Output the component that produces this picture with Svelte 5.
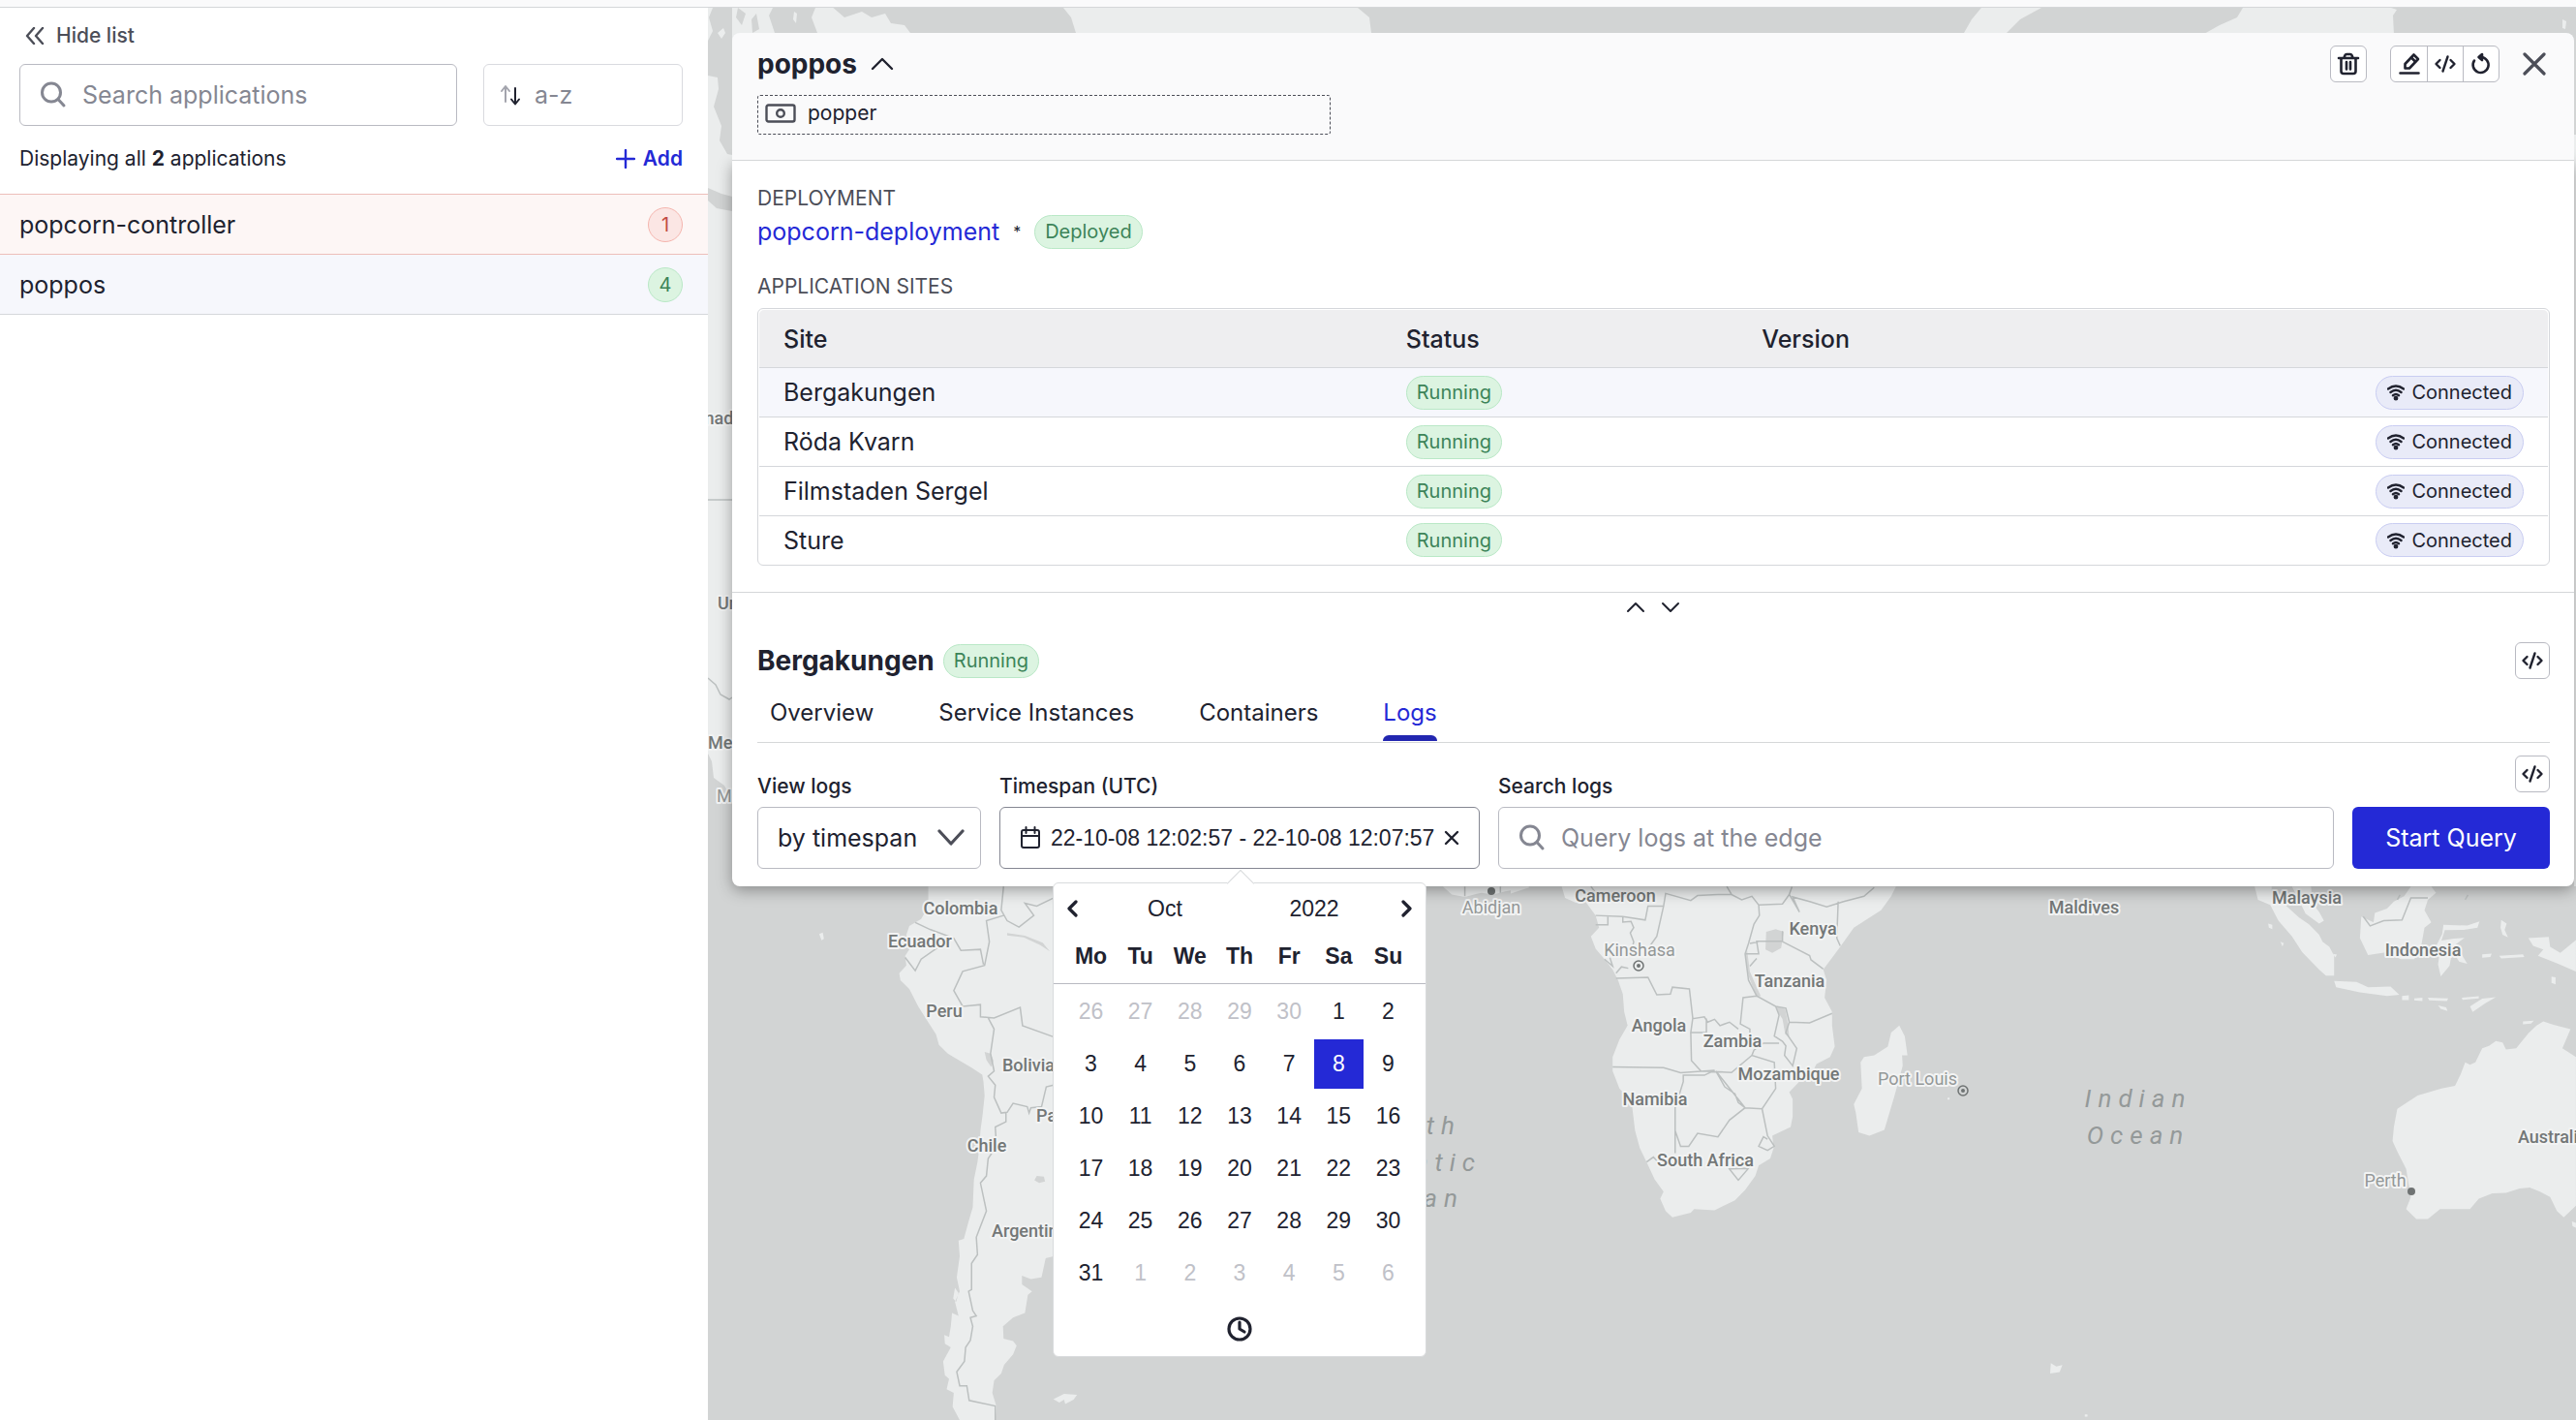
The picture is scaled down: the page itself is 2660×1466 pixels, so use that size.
<!--
  Applications view: the application list on the left, the details panel
  of the selected application over the site map on the right.

  The panel shows the sites of the deployment and, below the splitter,
  the log query form of the selected site with its timespan calendar.
-->
<script>
  const applications = [
    { name: 'popcorn-controller', count: 1, level: 'error' },
    { name: 'poppos', count: 4, level: 'ok' },
  ];

  const sites = ['Bergakungen', 'Röda Kvarn', 'Filmstaden Sergel', 'Sture'];
  const tabs = ['Overview', 'Service Instances', 'Containers', 'Logs'];
  const weekdays = ['Mo', 'Tu', 'We', 'Th', 'Fr', 'Sa', 'Su'];

  let search = $state('');
  let query = $state('');
  let selectedApp = $state('poppos');
  let selectedSite = $state('Bergakungen');
  let activeTab = $state('Logs');
  let mode = $state('timespan');
  let timespan = $state('22-10-08 12:02:57 - 22-10-08 12:07:57');
  let selectedDay = $state(8);

  // Six weeks starting on Monday, September 26th.
  const weeks = Array.from({ length: 6 }, (_, w) =>
    Array.from({ length: 7 }, (_, d) => {
      const n = w * 7 + d - 4;
      if (n < 1) return { day: n + 30, outside: true };
      if (n > 31) return { day: n - 31, outside: true };
      return { day: n, outside: false };
    })
  );

  // Map labels. City labels are lighter than country labels.
  const labels = [
    { text: 'Canada', x: 706, y: 438, anchor: 'start' },
    { text: 'United States', x: 741, y: 629, anchor: 'start' },
    { text: 'Mexico', x: 731, y: 773, anchor: 'start' },
    { text: 'Mexico City', x: 740, y: 828, anchor: 'start', city: true },
    { text: 'Colombia', x: 992, y: 944 },
    { text: 'Ecuador', x: 950, y: 978 },
    { text: 'Peru', x: 975, y: 1050 },
    { text: 'Bolivia', x: 1035, y: 1106, anchor: 'start' },
    { text: 'Paraguay', x: 1070, y: 1158, anchor: 'start' },
    { text: 'Chile', x: 1019, y: 1189 },
    { text: 'Argentina', x: 1024, y: 1277, anchor: 'start' },
    { text: 'Abidjan', x: 1540, y: 943, city: true },
    { text: 'Cameroon', x: 1668, y: 931 },
    { text: 'Kinshasa', x: 1693, y: 987, city: true },
    { text: 'Kenya', x: 1872, y: 965 },
    { text: 'Tanzania', x: 1848, y: 1019 },
    { text: 'Angola', x: 1713, y: 1065 },
    { text: 'Zambia', x: 1789, y: 1081 },
    { text: 'Mozambique', x: 1847, y: 1115 },
    { text: 'Namibia', x: 1709, y: 1141 },
    { text: 'South Africa', x: 1761, y: 1204 },
    { text: 'Port Louis', x: 1980, y: 1120, city: true },
    { text: 'Maldives', x: 2152, y: 943 },
    { text: 'Malaysia', x: 2382, y: 933 },
    { text: 'Indonesia', x: 2502, y: 987 },
    { text: 'Australia', x: 2600, y: 1180, anchor: 'start' },
    { text: 'Perth', x: 2463, y: 1225, city: true },
  ];
</script>

{#snippet codeIcon()}
  <svg viewBox="0 0 24 24" width="24" height="24" class="icon" aria-hidden="true">
    <path d="M6.500 8 2.500 12l4 4M17.500 8l4 4-4 4M14.500 4.500l-5 15" />
  </svg>
{/snippet}

{#snippet searchIcon()}
  <svg viewBox="0 0 28 28" width="28" height="28" class="icon" aria-hidden="true">
    <circle cx="12" cy="11.500" r="9.500" />
    <path d="m19 18.500 6 6.500" />
  </svg>
{/snippet}

<div class="topbar"></div>
<div class="layout">
  <aside class="sidebar">
    <button type="button" class="hide-list">
      <svg viewBox="0 0 20 18" width="20" height="18" class="icon" aria-hidden="true">
        <path d="M9 1 2 9l7 8M18 1l-7 8 7 8" />
      </svg>
      Hide list
    </button>

    <div class="filters">
      <label class="field search">
        {@render searchIcon()}
        <input type="text" aria-label="Search applications" placeholder="Search applications" bind:value={search} />
      </label>
      <button type="button" class="field sort">
        <svg viewBox="0 0 22 24" width="22" height="24" class="icon" aria-hidden="true">
          <path class="dim" d="M6 19V4M2 8l4-5 4 5" />
          <path d="M16 5v16M12 16.500l4 5 4-5" />
        </svg>
        a-z
      </button>
    </div>

    <div class="summary">
      <span>Displaying all <strong>2</strong> applications</span>
      <button type="button" class="add">
        <svg viewBox="0 0 20 20" width="20" height="20" class="icon" aria-hidden="true">
          <path d="M10 1v18M1 10h18" />
        </svg>
        Add
      </button>
    </div>

    <ul class="apps">
      {#each applications as app}
        <li>
          <button
            type="button"
            class="app {app.level}"
            class:selected={app.name === selectedApp}
            onclick={() => (selectedApp = app.name)}
          >
            {app.name}
            <span class="count">{app.count}</span>
          </button>
        </li>
      {/each}
    </ul>
  </aside>

  <main>
    <svg class="map" viewBox="731 8 1929 1458" preserveAspectRatio="xMinYMin slice" aria-hidden="true">
      <g class="land">
        <!-- North America, left of the panel -->
        <path d="M731 8H770V830L756 826 748 811 737 803 735 786 731 778Z" />
        <!-- Arctic coast, above the panel -->
        <path d="M756 8h42l-4 8 6 18h-44zM842 8l-4 10 6 16h96l-6-8-14-2-6-10-14 4-10-6-18 6-14-12zM1098 8l8 10 5 16h305l-2-16-12-10zM2046 8l-10 12-8 14h44l14-14 22-12zM2316 8l-6 10-18 8-18 10h198l-1-20 4-6-6-2zM2646 20l4 2-1 8-3-1z" />
        <path d="M2658 139h2v776h-2z" />
      </g>
      <g class="water">
        <path d="M736 8h20v152l-5-1-8-14 2-15-8-20 5-18-1-12-10-2V42l5-10-4-14zM731 194l14 6 11 3v15l-16-3-9-8z" />
        <path d="M762 8l8 6-4 12-6-8zM776 20l5-6 3 16-7 4z" />
      </g>
      <path class="land" d="M741 34l6-5 2 5-4 6zM820 12l3 2-1 10-3-4z" />
      <path class="border" d="M731 516h25M731 700l8 7 5 10 9 5 3-2" />

      <g transform="translate(740 900) scale(.6122 .361)">
        <path class="land" d="M357 42V100L345 135 325 155 320 180 328 215 318 240 320 268 308 290 310 310 325 335 340 385 355 425 370 465 375 495 390 520 405 535 430 560 448 580 450 600 452 640 449 690 445 740 443 790 440 830 434 880 432 960 425 1000 417 1050 408 1055 410 1100 405 1160 410 1200 402 1230 408 1270 397 1262 395 1300 392 1330 384 1325 385 1350 395 1360 382 1400 385 1440 392 1450 388 1480 400 1490 398 1530 410 1568H470L472 1530 465 1490 468 1455 480 1435 485 1410 500 1380 506 1355 500 1342 484 1335 483 1300 500 1275 520 1262 525 1210 532 1200 515 1180 515 1155 530 1165 548 1160 555 1105 568 1100V42ZM402 1190l6 15-4 25-5-10zM568 1508l18-15 22 3-6 14-14 12-2-12-8 8zM173 178l6-4 2 18-4 4z" />
        <path class="water" d="M452 515l10 5 5 20-4 18-8-20zM540 870l12 2 2 14-10 4-8-8zM490 175l30 8 30 20 12 25-16-18-28-22-28-6z" />
        <path class="border" d="M484 42 480 110 490 140 510 158 535 125 520 90 540 98 568 75M484 125 455 140 460 200 452 268 415 285 400 340 415 385 445 380 445 415 468 418 512 388 516 440 568 472M335 145 360 165 400 190 412 225 445 222 450 265M318 245 335 283 345 250 372 218M458 418 468 450 462 520 468 570 458 585 470 610 468 645 480 690 490 688 500 662 524 672 527 690 530 675 548 672 556 615 568 610M488 690 488 715 470 730 472 785 458 820 455 870 445 890 455 970 438 1045 440 1095 430 1120 430 1195 425 1200 432 1255 438 1270 428 1275 432 1300 428 1340 420 1360 418 1400 405 1430 410 1470 422 1470 426 1512 470 1528V1568" />
        <path class="land" d="M1225 42 1240 65 1262 72 1290 60 1310 65 1330 56 1370 45V42Z" />
        <path class="border" d="M1262 42v28M1322 42v18" />
      </g>

      <g transform="translate(1560 900) scale(.7015 .361)">
        <path class="land" d="M75 42 80 75 95 88 110 85 125 125 130 160 118 185 125 220 138 250 150 280 158 310 165 350 167 400 172 440 160 480 150 530 150 570 160 620 178 660 183 740 190 790 200 830 212 880 225 915 220 935 228 970 238 988 265 975 270 965 300 968 330 940 345 910 360 870 365 840 382 820 387 790 385 755 412 730 415 700 415 650 410 630 425 600 445 570 450 550 470 530 477 500 473 440 473 400 462 360 465 310 460 280 485 215 505 160 545 110 560 70 567 42Z" />
        <path class="land" d="M572 440 580 470 584 525 576 525 577 555 565 640 550 738 528 755 512 745 508 690 505 665 517 620 515 545 520 530 535 525 555 500 560 460Z" />
        <path class="land" d="M0 58 0 62 28 44 0 44ZM1095 42 1100 80 1118 95 1130 140 1150 185 1165 230 1190 280 1200 297H1212V240L1205 215 1195 200 1190 180 1175 150 1160 130 1140 95 1120 80 1120 42ZM1150 42 1160 80 1170 120 1190 148 1197 140 1190 115 1180 90 1178 42ZM1252 128 1250 190 1262 238 1290 230 1310 250 1330 250 1340 215 1345 160 1355 145 1345 110 1350 80 1362 60 1355 42H1325L1315 70 1300 85 1290 105 1272 118 1270 145Z" />
        <path class="land" d="M1212 312 1245 315 1262 330 1295 328 1308 352 1290 355 1250 345 1215 330ZM1312 355l10-2v14h-10zM1330 362l12-2v10l-12-2zM1350 360l30 2-2 8-26-2zM1400 360l25-4v6l-24 4zM1412 385l18-22 20-4-16 18-18 24zM1365 382l12 6 2 10-10-6zM1373 152l35 2 18-12-3 18-20 6-28 1-5 30 18-6 16-2-14 20 8 22 10 32-12-6-10-32-4 44-13 30-4-34 2-28-4-28 8-30zM1458 138l8 10-3 18 5 22-8-8-3-20zM1455 240l35-4 2 8-34 4zM1430 236l14-2-2 10-12 2z" />
        <path class="land" d="M1498 190 1528 186 1530 215 1545 232 1568 195V285L1540 262 1512 240 1520 222 1505 212ZM1532 300l6 2v20l-6-4zM1115 148l6 4v12l-5-4zM1133 200l5 4-2 10zM1210 235l6 2-2 8z" />
        <path class="land" d="M1568 530 1548 505 1560 450 1535 438 1520 428 1510 440 1498 462 1480 505 1465 508 1460 488 1450 484 1440 498 1430 505 1420 545 1412 552 1405 545 1398 580 1390 612 1370 620 1335 640 1305 678 1300 730 1298 770 1305 800 1318 850 1325 930 1318 965 1333 993H1350L1368 965H1412L1425 935 1445 920 1465 918 1485 906 1500 903 1515 915 1530 930 1540 970 1550 988 1568 955ZM1490 428l16-2-4 8-12 2zM1562 1000l6 4v14l-5-4zM795 1405l8 10 9-4-4 20-14 4zM845 1552h4v6h-4zM643 646h3v6h-3z" />
        <path class="water" d="M376 172 390 164 402 172 398 218 385 232 375 222ZM348 225l4 60 10 45 6 25-6 3-12-60-5-60zM392 385l12 8 4 40 2 40-6-8-4-44-8-24z" />
        <path class="border" d="M118 42 125 60M125 125 165 128 198 138 202 98 225 98 228 62 265 82 275 68 305 65 325 65 340 80 355 70 365 95 366 125 358 150 350 205 345 235 350 310 362 355 390 385 405 390 410 430 440 432 473 405M125 152h18V128M165 128v16l12-2 4 18-5 15 5 25-2 18M225 98 215 185 205 212M318 42l7 23M365 95 400 92 410 65 425 115 415 72 440 85 465 100 490 85 520 70 535 45M410 65l4-22M482 85 480 190 485 212M345 235h20l-3-36h38V170M400 200 440 240 442 252 460 278M352 205l12-4M352 270l10-22M155 305 202 302 215 352 235 350 238 330 263 335 268 420 285 415 290 430 300 422 308 440 322 430 335 450M268 418 265 460H288V420M265 460 266 540 280 570 325 574 355 525 388 545 390 620 370 678 345 675 302 570M362 355 342 360 338 435 352 450 352 480M390 385 395 410 388 470 400 485 405 498 403 525 415 555 421 505 405 460 410 430M355 525 358 510 372 490 395 490M150 558 225 560 250 575 300 568 285 582 254 582V600L242 675V805M302 570 315 615 330 635 335 660 345 675 322 710 305 758 275 748 262 785H250L242 740M370 678 378 755 388 785 378 797 365 785 372 758 378 765M200 830l10-14 6 12M322 850 350 848 335 882ZM138 250l12 20-4-24M155 290l8-18 10 4M1255 128 1265 155 1285 140 1312 138 1325 75H1350M1305 80l4-14M1405 80l4-14" />
      </g>

      {#each labels as l}
        <text class="label" class:city={l.city} x={l.x} y={l.y} text-anchor={l.anchor ?? 'middle'}>{l.text}</text>
      {/each}
      <g class="ocean">
        <text x="1509" y="1171" text-anchor="end">South</text>
        <text x="1530" y="1209" text-anchor="end">Atlantic</text>
        <text x="1512" y="1246" text-anchor="end">Ocean</text>
        <text x="2208" y="1143" text-anchor="middle">Indian</text>
        <text x="2208" y="1181" text-anchor="middle">Ocean</text>
      </g>
      <g class="dots">
        <circle cx="1540" cy="920" r="4" />
        <circle cx="2490" cy="1230" r="4" />
        <circle cx="1692" cy="997" r="2" />
        <circle cx="2027" cy="1126" r="2" />
        <circle class="ring" cx="1692" cy="997" r="5" />
        <circle class="ring" cx="2027" cy="1126" r="5" />
      </g>
    </svg>

    <section class="panel">
      <header class="panel-head">
        <div class="title-row">
          <h1>poppos</h1>
          <button type="button" class="bare" aria-label="Collapse">
            <svg viewBox="0 0 24 14" width="24" height="14" class="icon" aria-hidden="true">
              <path d="M2 12 12 2l10 10" />
            </svg>
          </button>
          <div class="actions">
            <button type="button" class="square" aria-label="Delete">
              <svg viewBox="0 0 24 24" width="24" height="24" class="icon thick" aria-hidden="true">
                <path d="M2 6h20M4.500 6.500v13a2.500 2.500 0 0 0 2.500 2.500h10a2.500 2.500 0 0 0 2.500-2.500v-13M7.500 5.500l1-2.500q.5-1 1.500-1h4q1 0 1.500 1l1 2.500" />
                <path d="M10 10v7.500M14 10v7.500" />
              </svg>
            </button>
            <div class="group">
              <button type="button" aria-label="Edit">
                <svg viewBox="0 0 24 24" width="24" height="24" class="icon thick" aria-hidden="true">
                  <path d="M2.500 21.500h19M7.500 16.500v-4.500l9-9.500 4.500 4.500-9 9.500z" />
                  <path d="M14 5.500l4 4" />
                </svg>
              </button>
              <button type="button" aria-label="View source">{@render codeIcon()}</button>
              <button type="button" aria-label="Restart">
                <svg viewBox="0 0 24 24" width="24" height="24" class="icon thick" aria-hidden="true">
                  <path d="M5 8.500a8 8 0 1 0 7-3.500" />
                  <path class="solid" d="M13 2 9.500 5 13 8z" />
                </svg>
              </button>
            </div>
            <button type="button" class="bare close" aria-label="Close">
              <svg viewBox="0 0 24 24" width="24" height="24" class="icon" aria-hidden="true">
                <path d="M2 2l20 20M22 2 2 22" />
              </svg>
            </button>
          </div>
        </div>
        <div class="tenant">
          <svg viewBox="0 0 32 20" width="32" height="20" class="icon" aria-hidden="true">
            <rect x="1.500" y="1.500" width="29" height="17" rx="2" />
            <circle cx="16" cy="10" r="3.800" />
          </svg>
          popper
        </div>
      </header>

      <div class="panel-body">
        <section class="details">
          <h2 class="caps">DEPLOYMENT</h2>
          <p class="deployment">
            <a href="#deployment">popcorn-deployment</a>
            <sup>*</sup>
            <span class="badge ok">Deployed</span>
          </p>

          <h2 class="caps">APPLICATION SITES</h2>
          <div class="table-frame">
            <table class="sites">
              <thead>
                <tr><th class="site">Site</th><th class="status">Status</th><th>Version</th><th></th></tr>
              </thead>
              <tbody>
                {#each sites as site}
                  <tr class:selected={site === selectedSite} onclick={() => (selectedSite = site)}>
                    <td>{site}</td>
                    <td><span class="badge ok">Running</span></td>
                    <td></td>
                    <td class="right">
                      <span class="badge info">
                        <svg viewBox="0 0 18 18" width="18" height="18" class="icon" aria-hidden="true">
                          <path d="M1 5.500q8-6 16 0M3.500 9q5.500-4.500 11 0M6 12.200q3-2.400 6 0" />
                          <circle class="solid" cx="9" cy="15.200" r="1.200" />
                        </svg>
                        Connected
                      </span>
                    </td>
                  </tr>
                {/each}
              </tbody>
            </table>
          </div>
        </section>

        <div class="splitter">
          <button type="button" class="bare" aria-label="Move up">
            <svg viewBox="0 0 20 12" width="20" height="12" class="icon" aria-hidden="true">
              <path d="m2 10 8-8 8 8" />
            </svg>
          </button>
          <button type="button" class="bare" aria-label="Move down">
            <svg viewBox="0 0 20 12" width="20" height="12" class="icon" aria-hidden="true">
              <path d="m2 2 8 8 8-8" />
            </svg>
          </button>
        </div>

        <section class="site-details">
          <div class="site-head">
            <h2>{selectedSite}</h2>
            <span class="badge ok">Running</span>
            <button type="button" class="square" aria-label="View site source">{@render codeIcon()}</button>
          </div>

          <div class="tabs" role="tablist">
            {#each tabs as tab}
              <button type="button" role="tab" aria-selected={tab === activeTab} onclick={() => (activeTab = tab)}>{tab}</button>
            {/each}
          </div>

          <form class="query" onsubmit={(e) => e.preventDefault()}>
            <div class="col">
              <label for="mode">View logs</label>
              <div class="field select">
                <select id="mode" bind:value={mode}>
                  <option value="timespan">by timespan</option>
                  <option value="tail">tail</option>
                </select>
                <svg viewBox="0 0 28 18" width="28" height="18" class="icon" aria-hidden="true">
                  <path d="m2 2 12 13L26 2" />
                </svg>
              </div>
            </div>

            <div class="col">
              <label for="timespan">Timespan (UTC)</label>
              <div class="field timespan">
                <svg viewBox="0 0 22 24" width="22" height="24" class="icon" aria-hidden="true">
                  <rect x="2" y="4" width="18" height="18" rx="2" />
                  <path d="M2 10h18M6.500 1v6M15.500 1v6" />
                </svg>
                <input id="timespan" type="text" bind:value={timespan} />
                <button type="button" class="bare" aria-label="Clear" onclick={() => (timespan = '')}>
                  <svg viewBox="0 0 16 16" width="16" height="16" class="icon" aria-hidden="true">
                    <path d="m2 2 12 12M14 2 2 14" />
                  </svg>
                </button>

                <div class="calendar">
                  <div class="calendar-head">
                    <button type="button" class="bare" aria-label="Previous month">
                      <svg viewBox="0 0 14 18" width="14" height="18" class="icon" aria-hidden="true">
                        <path d="m10 2-7 7 7 7" />
                      </svg>
                    </button>
                    <button type="button" class="bare period">Oct</button>
                    <button type="button" class="bare period">2022</button>
                    <button type="button" class="bare" aria-label="Next month">
                      <svg viewBox="0 0 14 18" width="14" height="18" class="icon" aria-hidden="true">
                        <path d="m4 2 7 7-7 7" />
                      </svg>
                    </button>
                  </div>
                  <table>
                    <thead>
                      <tr>
                        {#each weekdays as weekday}<th>{weekday}</th>{/each}
                      </tr>
                    </thead>
                    <tbody>
                      {#each weeks as week}
                        <tr>
                          {#each week as cell}
                            <td>
                              <button
                                type="button"
                                class:outside={cell.outside}
                                class:picked={!cell.outside && cell.day === selectedDay}
                                onclick={() => (selectedDay = cell.day)}
                              >{cell.day}</button>
                            </td>
                          {/each}
                        </tr>
                      {/each}
                    </tbody>
                  </table>
                  <button type="button" class="bare time" aria-label="Select time">
                    <svg viewBox="0 0 26 26" width="26" height="26" class="icon" aria-hidden="true">
                      <circle cx="13" cy="13" r="11" />
                      <path d="M13 6v7l5 3" />
                    </svg>
                  </button>
                </div>
              </div>
            </div>

            <div class="col grow">
              <label for="query">Search logs</label>
              <div class="field search">
                {@render searchIcon()}
                <input id="query" type="text" placeholder="Query logs at the edge" bind:value={query} />
              </div>
            </div>

            <div class="col submit">
              <button type="button" class="square" aria-label="View query source">{@render codeIcon()}</button>
              <button type="submit" class="primary">Start Query</button>
            </div>
          </form>
        </section>
      </div>
    </section>
  </main>
</div>

<style>
  :global(body) {
    margin: 0;
    background: #fff;
    color: #20222f;
    font: 25px/32px Inter, "Open Sans", sans-serif;
  }
  * { box-sizing: border-box; }
  button, input, select { font: inherit; color: inherit; }
  button { cursor: pointer; }
  h1, h2, p, ul { margin: 0; padding: 0; }

  .icon {
    display: block;
    flex: none;
    fill: none;
    stroke: currentColor;
    stroke-width: 2.400;
    stroke-linecap: round;
    stroke-linejoin: round;
  }
  .icon.thick { stroke-width: 2.600; }
  .icon .solid { fill: currentColor; }
  .icon .dim { stroke: #a3a4ad; }

  .topbar {
    height: 8px;
    background: #fafafb;
    border-bottom: 1px solid #d5d7d9;
  }
  .layout {
    display: flex;
    min-height: calc(100vh - 8px);
  }

  .bare {
    display: flex;
    align-items: center;
    justify-content: center;
    background: none;
    border: 0;
    padding: 0;
  }

  .field {
    display: flex;
    align-items: center;
    height: 64px;
    background: #fff;
    border: 1px solid #b9bac2;
    border-radius: 6px;
    padding: 0 20px;
  }
  .field input, .field select {
    flex: 1;
    width: 100%;
    min-width: 0;
    border: 0;
    outline: 0;
    padding: 0;
    background: none;
  }
  .field.search { gap: 16px; color: #858792; }
  .field.search .icon { stroke-width: 3; }
  .field.search input { color: #20222f; }
  .field.search input::placeholder { color: #858792; opacity: 1; }

  /* Sidebar */
  .sidebar {
    flex: none;
    width: 731px;
    background: #fff;
  }
  .hide-list {
    display: flex;
    align-items: center;
    gap: 12px;
    height: 58px;
    padding: 0 26px;
    background: none;
    border: 0;
    color: #4c4e58;
    font-size: 21px;
    font-weight: 500;
  }
  .filters {
    display: flex;
    gap: 27px;
    padding: 0 26px 0 20px;
  }
  .filters .search { flex: 1; }
  .sort {
    width: 206px;
    gap: 14px;
    padding: 0 16px;
    border-color: #d9dadf;
    color: #858792;
  }
  .sort .icon { stroke: #20222f; stroke-width: 2; }
  .summary {
    display: flex;
    align-items: center;
    justify-content: space-between;
    height: 71px;
    padding: 0 26px 4px 20px;
    font-size: 21px;
  }
  .summary strong { font-weight: 700; }
  .add {
    display: flex;
    align-items: center;
    gap: 8px;
    background: none;
    border: 0;
    padding: 0;
    color: #2429d6;
    font-weight: 600;
  }
  .apps { list-style: none; }
  .app {
    display: flex;
    align-items: center;
    justify-content: space-between;
    width: 100%;
    height: 62px;
    padding: 0 26px 0 20px;
    border: 0;
    border-bottom: 1px solid #d5d7db;
    background: #fff;
    text-align: left;
  }
  .app.selected { background: #f6f7fc; }
  .app.error {
    background: #fdf6f5;
    border-bottom-color: #edbfba;
    box-shadow: 0 -1px #edbfba;
  }
  .count {
    width: 36px;
    height: 36px;
    border: 1px solid #b9e8c6;
    border-radius: 50%;
    background: #dcf4e1;
    color: #3d8459;
    font-size: 20px;
    line-height: 34px;
    text-align: center;
  }
  .error .count {
    background: #fbe6e4;
    border-color: #f5b5ae;
    color: #c24a44;
  }

  /* Map */
  main {
    position: relative;
    flex: 1;
    min-width: 0;
    overflow: hidden;
    background: #d2d4d4;
  }
  .map {
    position: absolute;
    inset: 0;
    width: 100%;
    height: 100%;
    font-family: Roboto, sans-serif;
  }
  .land { fill: #ebeded; }
  .water { fill: #d2d4d4; }
  .border {
    fill: none;
    stroke: #bcc0c0;
    stroke-width: 1.500;
    vector-effect: non-scaling-stroke;
  }
  .label {
    fill: #737777;
    stroke: #f2f3f3;
    stroke-width: 4;
    stroke-linejoin: round;
    paint-order: stroke;
    font-size: 18px;
    font-weight: 500;
  }
  .label.city { fill: #949898; font-weight: 400; }
  .ocean {
    fill: #949999;
    font-size: 26px;
    font-style: italic;
    letter-spacing: 7px;
  }
  .dots { fill: #6f7373; }
  .dots .ring { fill: none; stroke: #6f7373; stroke-width: 1.500; }

  /* Panel */
  .panel {
    position: relative;
    margin: 26px 2px 0 25px;
  }
  .panel-head {
    position: relative;
    padding: 12px 25px 26px 26px;
    background: #fafafb;
    border-bottom: 1px solid #d5d7d9;
    border-radius: 8px 8px 0 0;
  }
  .panel-body {
    background: #fff;
    border-radius: 0 0 8px 8px;
    box-shadow: 0 4px 16px rgba(0, 0, 0, 0.35);
  }
  .title-row {
    display: flex;
    align-items: center;
    gap: 14px;
    height: 40px;
    margin-bottom: 12px;
  }
  h1, .site-head h2 { font-size: 28px; line-height: 32px; font-weight: 700; }
  .actions {
    display: flex;
    align-items: center;
    gap: 24px;
    margin-left: auto;
  }
  .square, .group {
    display: flex;
    align-items: center;
    justify-content: center;
    height: 38px;
    background: #fff;
    border: 1px solid #b9bac2;
    border-radius: 6px;
    padding: 0;
  }
  .square { width: 36px; flex: none; }
  .actions .square { width: 38px; }
  .group button {
    display: flex;
    align-items: center;
    justify-content: center;
    width: 37px;
    height: 36px;
    padding: 0;
    background: none;
    border: 0;
  }
  .group button + button { border-left: 1px solid #b9bac2; }
  .close { margin-right: 4px; color: #4c4e58; }
  .close .icon { stroke-width: 3.200; }
  .tenant {
    display: flex;
    align-items: center;
    gap: 12px;
    width: 32%;
    height: 41px;
    padding: 0 7px 3px;
    border: 1px dashed #4c4e58;
    border-radius: 3px;
    font-size: 21px;
  }
  .tenant .icon { color: #4c4e58; }

  .details { padding: 25px 25px 27px 26px; border-bottom: 1px solid #d5d7d9; }
  .caps {
    color: #4c4e58;
    font-size: 21px;
    line-height: 28px;
    font-weight: 400;
  }
  .deployment {
    display: flex;
    align-items: center;
    gap: 14px;
    height: 40px;
    margin-bottom: 23px;
  }
  .deployment a { color: #2429d6; text-decoration: none; }
  .deployment sup { font-size: 16px; line-height: 16px; }

  .badge {
    display: inline-flex;
    align-items: center;
    gap: 7px;
    height: 35px;
    padding: 0 10px;
    border: 1px solid;
    border-radius: 18px;
    font-size: 20px;
    vertical-align: middle;
  }
  .badge.ok { background: #dcf4e1; border-color: #b9e8c6; color: #3d8459; }
  .badge.info { background: #e9ebf8; border-color: #c9cdf2; padding: 0 11px; }

  .table-frame {
    margin-top: 8px;
    padding: 1px;
    border: 1px solid #d5d7db;
    border-radius: 6px;
  }
  .sites {
    width: 100%;
    border-collapse: separate;
    border-spacing: 0;
  }
  .sites th {
    height: 60px;
    padding: 0 0 0 25px;
    background: #eeeef0;
    border-bottom: 1px solid #d5d7db;
    text-align: left;
    font-weight: 500;
  }
  .sites th:first-child { border-top-left-radius: 5px; }
  .sites th:last-child { border-top-right-radius: 5px; }
  .sites .site { width: 34.8%; }
  .sites .status { width: 19.9%; }
  .sites td {
    height: 51px;
    padding: 0 0 0 25px;
    border-bottom: 1px solid #d5d7db;
  }
  .sites tr:last-child td { height: 49px; border-bottom: 0; }
  .sites .selected td { background: #f6f7fc; }
  .sites td.right { padding-right: 25px; text-align: right; }

  .splitter {
    display: flex;
    justify-content: center;
    gap: 16px;
    padding: 9px 0 19px;
  }
  .splitter .icon { stroke-width: 2; }

  .site-details { padding: 0 25px 18px 26px; }
  .site-head {
    display: flex;
    align-items: center;
    gap: 9px;
    height: 60px;
  }
  .site-head .square { margin-left: auto; }
  .tabs {
    display: flex;
    gap: 67px;
    padding: 0 13px;
    border-bottom: 1px solid #d5d7d9;
    font-size: 24px;
  }
  .tabs button {
    position: relative;
    height: 54px;
    padding: 0 0 6px;
    background: none;
    border: 0;
  }
  .tabs [aria-selected='true'] { color: #2429d6; }
  .tabs [aria-selected='true']::after {
    content: '';
    position: absolute;
    inset: auto 0 1px;
    height: 6px;
    background: #2226b0;
    border-radius: 6px 6px 0 0;
  }

  .query { display: flex; align-items: flex-end; gap: 19px; padding-top: 13px; }
  .col label[for] {
    display: block;
    margin-bottom: 5px;
    font-size: 21px;
    line-height: 32px;
    font-weight: 500;
  }
  .grow { flex: 1; }
  .select { position: relative; width: 231px; }
  .select select { height: 60px; appearance: none; }
  .select .icon {
    position: absolute;
    right: 16px;
    color: #4c4e58;
    stroke-width: 3.200;
    pointer-events: none;
  }
  .timespan {
    position: relative;
    width: 496px;
    gap: 10px;
    border-color: #858792;
    font-family: "Liberation Sans", Arial, sans-serif;
    font-size: 23px;
  }
  .timespan > .icon { stroke-width: 2; }
  .submit {
    display: flex;
    flex-direction: column;
    align-items: flex-end;
    gap: 15px;
  }
  .primary {
    width: 204px;
    height: 64px;
    background: #2429d6;
    border: 0;
    border-radius: 6px;
    color: #fff;
  }

  /* Calendar popup, with its pointer towards the timespan field */
  .calendar {
    position: absolute;
    top: calc(100% + 15px);
    left: 50%;
    z-index: 2;
    width: 386px;
    transform: translateX(-50%);
    background: #fff;
    border: 1px solid #d9dbdd;
    border-radius: 6px;
  }
  .calendar::before {
    content: '';
    position: absolute;
    top: -10px;
    left: calc(50% - 9px);
    width: 19px;
    height: 19px;
    background: #fff;
    border: 1px solid #d9dbdd;
    border-width: 1px 0 0 1px;
    transform: rotate(45deg);
  }
  .calendar-head {
    position: relative;
    display: flex;
    align-items: center;
    gap: 22px;
    height: 52px;
    padding: 0 13px;
  }
  .calendar-head .icon, .time .icon { stroke-width: 3.200; }
  .period { flex: 1; }
  .calendar table {
    width: 100%;
    border-collapse: collapse;
    table-layout: fixed;
  }
  .calendar th {
    height: 51px;
    padding: 0 0 4px;
    border-bottom: 1px solid #b9bac2;
  }
  .calendar td { height: 54px; padding: 3px 0 0; }
  .calendar :is(th, td):first-child { width: 64px; padding-left: 13px; }
  .calendar :is(th, td):last-child { width: 64px; padding-right: 13px; }
  .calendar td button {
    display: block;
    width: 100%;
    height: 51px;
    padding: 0;
    background: none;
    border: 0;
  }
  .calendar td .outside { color: #c0c1c8; }
  .calendar td .picked { background: #2429d6; color: #fff; }
  .time { width: 100%; height: 60px; padding-top: 4px; }
</style>
